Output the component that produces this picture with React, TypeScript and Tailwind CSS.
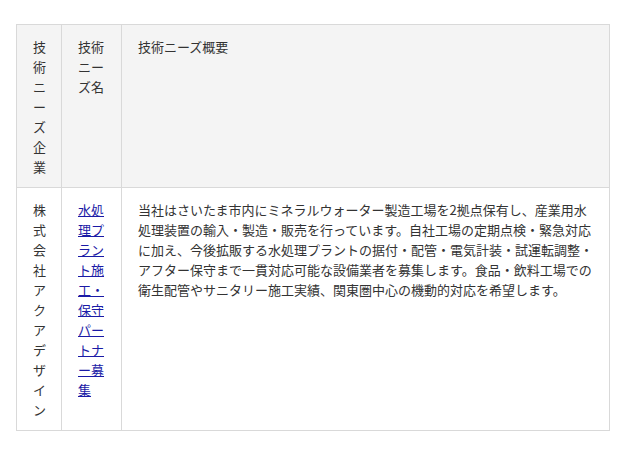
export default function App() {
  const font = { fontFamily: '"Noto Sans CJK JP", "Noto Sans", sans-serif' };
  return (
    <div className="w-[640px] h-[455px] bg-white pt-[24px] pl-[16px]" style={font}>
      <table className="w-[594px] table-fixed border-collapse text-[13px] leading-[20px] text-[#333]">
        <colgroup>
          <col className="w-[45px]" />
          <col className="w-[60px]" />
          <col />
        </colgroup>
        <thead>
          <tr className="bg-[#f4f4f4]">
            <th className="border border-[#d9d9d9] px-[16px] pt-[12px] pb-[10px] text-left align-top font-normal break-all">技術ニーズ企業</th>
            <th className="border border-[#d9d9d9] px-[16px] pt-[12px] pb-[10px] text-left align-top font-normal break-all">技術ニーズ名</th>
            <th className="border border-[#d9d9d9] px-[16px] pt-[12px] pb-[10px] text-left align-top font-normal">技術ニーズ概要</th>
          </tr>
        </thead>
        <tbody>
          <tr>
            <td className="border border-[#d9d9d9] px-[16px] pt-[12px] pb-[10px] align-top break-all">株式会社アクアデザイン</td>
            <td className="border border-[#d9d9d9] px-[16px] pt-[12px] pb-[10px] align-top break-all">
              <a href="#" className="text-[#1a1aa6] underline">水処理プラント施工・保守パートナー募集</a>
            </td>
            <td className="border border-[#d9d9d9] px-[16px] pt-[12px] pb-[10px] align-top">
              当社はさいたま市内にミネラルウォーター製造工場を2拠点保有し、産業用水処理装置の輸入・製造・販売を行っています。自社工場の定期点検・緊急対応に加え、今後拡販する水処理プラントの据付・配管・電気計装・試運転調整・アフター保守まで一貫対応可能な設備業者を募集します。食品・飲料工場での衛生配管やサニタリー施工実績、関東圏中心の機動的対応を希望します。
            </td>
          </tr>
        </tbody>
      </table>
    </div>
  );
}
